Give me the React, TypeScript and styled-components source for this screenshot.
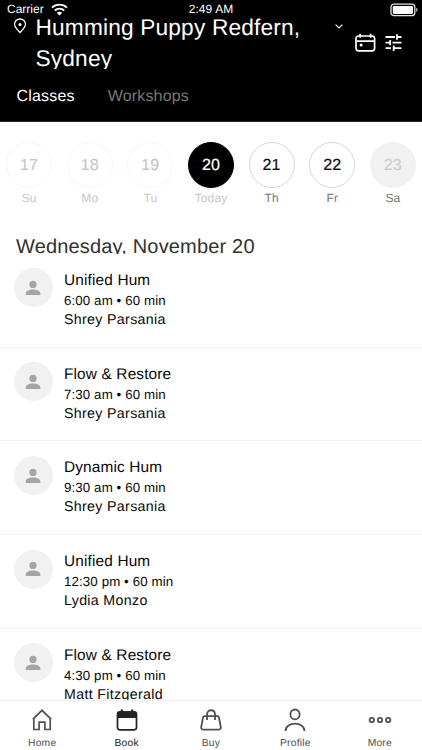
import React from "react";
import styled, { createGlobalStyle } from "styled-components";

const GlobalStyle = createGlobalStyle`
  * { box-sizing: border-box; }
  body { margin: 0; background: #fff; overflow: hidden; }
`;

const Screen = styled.div`
  width: 422px;
  height: 750px;
  display: flex;
  flex-direction: column;
  overflow: hidden;
  background: #fff;
  color: #101010;
  font-family: "Liberation Sans", Arial, sans-serif;
  white-space: nowrap;
  text-rendering: geometricPrecision;
`;

const Header = styled.header`
  height: 122px;
  flex: none;
  background: #000;
  border-bottom: 1px solid #262626;
  color: #fff;
`;

const StatusBar = styled.div`
  height: 19px;
  display: grid;
  grid-template-columns: 1fr auto 1fr;
  padding: 0 4px 0 7px;
  font-size: 12px;
  line-height: 19px;
`;

const Clock = styled.span`
  letter-spacing: 0.1px;
  padding-right: 3px;
`;

const StatusSide = styled.div<{ $end?: boolean }>`
  display: flex;
  gap: 7px;
  justify-content: ${(p) => (p.$end ? "flex-end" : "flex-start")};

  svg { margin-top: 3px; }
`;

const TitleRow = styled.div`
  display: flex;
  align-items: flex-start;
  height: 57px;
  margin-top: -7px;
  padding-left: 13px;
`;

const PinSlot = styled.span`
  width: 22.5px;
  padding-top: 6px;
  line-height: 0;
`;

const StudioName = styled.h1`
  width: 296.5px;
  height: 57px;
  overflow: hidden;
  margin: 0;
  font-size: 22.7px;
  font-weight: 400;
  line-height: 30.5px;
  letter-spacing: 0.17px;
  white-space: pre-line;
`;

const ChevronSlot = styled.span`
  width: 22px;
  padding: 12px 0 0 3px;
  line-height: 0;
`;

const HeaderActions = styled.div`
  display: flex;
  gap: 9px;
  padding-top: 21px;
  line-height: 0;
`;

const Tabs = styled.nav`
  display: flex;
  gap: 33px;
  padding: 14.5px 0 0 16.5px;
`;

const Tab = styled.span<{ $active?: boolean }>`
  font-size: 16px;
  line-height: 25px;
  letter-spacing: 0.18px;
  color: ${(p) => (p.$active ? "#fff" : "#787878")};
`;

const DateStrip = styled.div`
  flex: none;
  width: 424.4px;
  height: 112px;
  margin-left: -1.2px;
  padding-top: 19.6px;
  display: grid;
  grid-template-columns: repeat(7, 1fr);
`;

type Tone = "past" | "today" | "open" | "closed";

const dayTones: Record<Tone, { bg: string; line: string; num: string; label: string }> = {
  past: { bg: "#fff", line: "#f5f5f5", num: "#c8c8c8", label: "#c6c6c6" },
  today: { bg: "#000", line: "#000", num: "#fff", label: "#c6c6c6" },
  open: { bg: "#fff", line: "#d8d8d8", num: "#101010", label: "#747474" },
  closed: { bg: "#f1f1f1", line: "#f1f1f1", num: "#cdcdcd", label: "#747474" },
};

const Day = styled.div<{ $tone: Tone }>`
  display: flex;
  flex-direction: column;
  align-items: center;
  font-size: 12px;
  line-height: 20px;
  letter-spacing: 0.1px;
  color: ${(p) => dayTones[p.$tone].label};
`;

const DayCircle = styled.span<{ $tone: Tone }>`
  width: 46px;
  height: 46px;
  border-radius: 50%;
  border: 1px solid ${(p) => dayTones[p.$tone].line};
  background: ${(p) => dayTones[p.$tone].bg};
  color: ${(p) => dayTones[p.$tone].num};
  font-size: 16px;
  line-height: 46px;
  text-align: center;
  letter-spacing: 0.2px;
  -webkit-text-stroke: 0.2px;
`;

const DateHeading = styled.h2`
  flex: none;
  height: 19.6px;
  overflow: hidden;
  margin: 0;
  padding-left: 16px;
  font-size: 20px;
  font-weight: 400;
  line-height: 27px;
  letter-spacing: 0.17px;
  color: #303030;
`;

const ClassList = styled.div`
  flex: 1;
  min-height: 0;
  overflow: hidden;
`;

const ClassRow = styled.article`
  height: 93.7px;
  display: flex;
  gap: 11.5px;
  padding: 14.6px 0 0 13.5px;
  border-bottom: 1px solid #f2f2f2;

  &:first-child { height: 94.2px; padding-top: 14.9px; }
`;

const Avatar = styled.span`
  width: 39px;
  height: 39px;
  border-radius: 50%;
  background: #f1f1f1;
  display: grid;
  place-items: center;
`;

const ClassInfo = styled.div`
  padding-top: 1.4px;
  color: #080808;
`;

const ClassName = styled.div`
  font-size: 15.4px;
  line-height: 22px;
  letter-spacing: 0.15px;
`;

const ClassTime = styled.div`
  font-size: 13.3px;
  line-height: 18px;
  letter-spacing: 0.11px;
`;

const Teacher = styled.div`
  font-size: 14.2px;
  line-height: 21px;
  letter-spacing: 0.34px;
`;

const TabBar = styled.nav`
  flex: none;
  height: 50.5px;
  display: grid;
  grid-template-columns: repeat(5, 1fr);
  border-top: 1px solid #f1f1f1;
  background: #fff;
`;

const TabItem = styled.span<{ $active?: boolean }>`
  display: flex;
  flex-direction: column;
  align-items: center;
  padding-top: 7px;
  font-size: 10.3px;
  line-height: 16px;
  letter-spacing: 0.22px;
  color: ${(p) => (p.$active ? "#222328" : "#4d4e53")};

  svg { flex: none; margin-bottom: 4.2px; }
`;

const WifiIcon = () => (
  <svg width="17" height="13" viewBox="0 0 17 13" fill="none" stroke="#fff" strokeWidth="1.9">
    <path d="M1 4.6C5.2.6 11.8.6 16 4.6M3.8 7.5c2.7-2.5 6.7-2.5 9.4 0" />
    <path d="M5.8 9.8c1.6-1.3 3.8-1.3 5.4 0L8.5 12.5z" fill="#fff" stroke="none" />
  </svg>
);

const BatteryIcon = () => (
  <svg width="28" height="14" viewBox="0 0 28 14" fill="none">
    <rect x="1" y="1.1" width="23.8" height="11.6" rx="3" stroke="#e2e2e2" strokeWidth="1.3" />
    <rect x="2.8" y="2.9" width="20.2" height="8" rx="1.3" fill="#fff" />
    <path d="M26.2 4.8c1.8.6 1.8 3.5 0 4.1z" fill="#c8c8c8" />
  </svg>
);

const PinIcon = () => (
  <svg width="14" height="17" viewBox="0 0 14 17" fill="none">
    <path d="M7 14.5C4.3 11.7 1.5 9 1.5 6.2a5.5 5.2 0 0 1 11 0C12.5 9 9.7 11.7 7 14.5z" stroke="#fff" strokeWidth="1.3" />
    <circle cx="7" cy="6.4" r="1.5" fill="#fff" />
  </svg>
);

const ChevronIcon = () => (
  <svg width="8" height="5" viewBox="0 0 8 5" fill="none" stroke="#fff" strokeWidth="1.1">
    <path d="M.6 .6L4 4 7.4.6" />
  </svg>
);

const CalendarIcon = () => (
  <svg width="22" height="20" viewBox="0 0 22 20" fill="none" stroke="#fff" strokeWidth="1.7">
    <rect x="2" y="3" width="18.6" height="14.8" rx="2.5" />
    <path d="M2.3 8.2h18M6.1 .8v4M16.6 .8v4" />
    <circle cx="7.1" cy="12" r="1.5" fill="#fff" stroke="none" />
  </svg>
);

const FiltersIcon = () => (
  <svg width="18" height="20" viewBox="0 0 18 20" fill="none" stroke="#fff" strokeWidth="1.8">
    <path d="M.5 4h9.5M12 4h4.5M12 1.3v5.4M.5 9.6H5M7.5 9.6h9M5.2 6.9v5.4M.5 15.2H6M9 15.2h7.5M8.7 12.5v5.4" />
  </svg>
);

const PersonIcon = () => (
  <svg width="16" height="16" viewBox="0 0 16 16" fill="#a5a5a5">
    <circle cx="8" cy="4.4" r="3.6" />
    <path d="M.7 15v-1.5C.7 11.1 4.5 9.6 8 9.6s7.3 1.5 7.3 3.9V15z" />
  </svg>
);

const HomeIcon = () => (
  <svg width="22" height="24" viewBox="0 0 22 24" fill="none" stroke="#505157" strokeWidth="1.7">
    <path d="M1.8 11.4L11 2.3l9.2 9.1M2.8 10.4v11.1h5.3v-7.4h5.8v7.4h5.3V10.4" />
  </svg>
);

const BookIcon = () => (
  <svg width="22" height="24" viewBox="0 0 22 24">
    <rect x="1.5" y="4" width="19" height="17.8" rx="2.2" fill="none" stroke="#222328" strokeWidth="1.7" />
    <path d="M1 5.5Q1 3.3 3.2 3.3H4.7V1.5h2.2v1.8h8.2V1.5h2.2v1.8h1.5Q21 3.3 21 5.5V10H1z" fill="#222328" />
  </svg>
);

const BuyIcon = () => (
  <svg width="22" height="24" viewBox="0 0 22 24" fill="none" stroke="#505157" strokeWidth="1.8">
    <path d="M4.3 8.2h13.4q1 0 1.2 1L20.8 19q.2 2.7-2.3 2.7h-15Q1 21.7 1.2 19L3.1 9.2q.2-1 1.2-1z" strokeLinejoin="round" />
    <path d="M7 12V6.5c0-5.7 8-5.7 8 0V12" />
  </svg>
);

const ProfileIcon = () => (
  <svg width="22" height="24" viewBox="0 0 22 24" fill="none" stroke="#505157" strokeWidth="1.8">
    <ellipse cx="11" cy="6.4" rx="4.6" ry="4.9" />
    <path d="M1.5 22.9C1.7 13.2 20.3 13.2 20.5 22.9" />
  </svg>
);

const MoreIcon = () => (
  <svg width="24" height="24" viewBox="0 0 24 24" fill="none" stroke="#505157" strokeWidth="1.8">
    <circle cx="3.8" cy="12" r="2.2" />
    <circle cx="12" cy="12" r="2.2" />
    <circle cx="20.2" cy="12" r="2.2" />
  </svg>
);

const days: { num: string; label: string; tone: Tone }[] = [
  { num: "17", label: "Su", tone: "past" },
  { num: "18", label: "Mo", tone: "past" },
  { num: "19", label: "Tu", tone: "past" },
  { num: "20", label: "Today", tone: "today" },
  { num: "21", label: "Th", tone: "open" },
  { num: "22", label: "Fr", tone: "open" },
  { num: "23", label: "Sa", tone: "closed" },
];

const classes = [
  { name: "Unified Hum", time: "6:00 am • 60 min", teacher: "Shrey Parsania" },
  { name: "Flow & Restore", time: "7:30 am • 60 min", teacher: "Shrey Parsania" },
  { name: "Dynamic Hum", time: "9:30 am • 60 min", teacher: "Shrey Parsania" },
  { name: "Unified Hum", time: "12:30 pm • 60 min", teacher: "Lydia Monzo" },
  { name: "Flow & Restore", time: "4:30 pm • 60 min", teacher: "Matt Fitzgerald" },
];

const navItems = [
  { label: "Home", Icon: HomeIcon },
  { label: "Book", Icon: BookIcon, active: true },
  { label: "Buy", Icon: BuyIcon },
  { label: "Profile", Icon: ProfileIcon },
  { label: "More", Icon: MoreIcon },
];

export default function App() {
  return (
    <Screen>
      <GlobalStyle />
      <Header>
        <StatusBar>
          <StatusSide>Carrier<WifiIcon /></StatusSide>
          <Clock>2:49 AM</Clock>
          <StatusSide $end><BatteryIcon /></StatusSide>
        </StatusBar>
        <TitleRow>
          <PinSlot><PinIcon /></PinSlot>
          <StudioName>{"Humming Puppy Redfern,\nSydney"}</StudioName>
          <ChevronSlot><ChevronIcon /></ChevronSlot>
          <HeaderActions>
            <CalendarIcon />
            <FiltersIcon />
          </HeaderActions>
        </TitleRow>
        <Tabs>
          <Tab $active>Classes</Tab>
          <Tab>Workshops</Tab>
        </Tabs>
      </Header>
      <DateStrip>
        {days.map((d) => (
          <Day key={d.num} $tone={d.tone}>
            <DayCircle $tone={d.tone}>{d.num}</DayCircle>
            {d.label}
          </Day>
        ))}
      </DateStrip>
      <DateHeading>Wednesday, November 20</DateHeading>
      <ClassList>
        {classes.map((c) => (
          <ClassRow key={c.time}>
            <Avatar><PersonIcon /></Avatar>
            <ClassInfo>
              <ClassName>{c.name}</ClassName>
              <ClassTime>{c.time}</ClassTime>
              <Teacher>{c.teacher}</Teacher>
            </ClassInfo>
          </ClassRow>
        ))}
      </ClassList>
      <TabBar>
        {navItems.map(({ label, Icon, active }) => (
          <TabItem key={label} $active={active}>
            <Icon />
            {label}
          </TabItem>
        ))}
      </TabBar>
    </Screen>
  );
}
